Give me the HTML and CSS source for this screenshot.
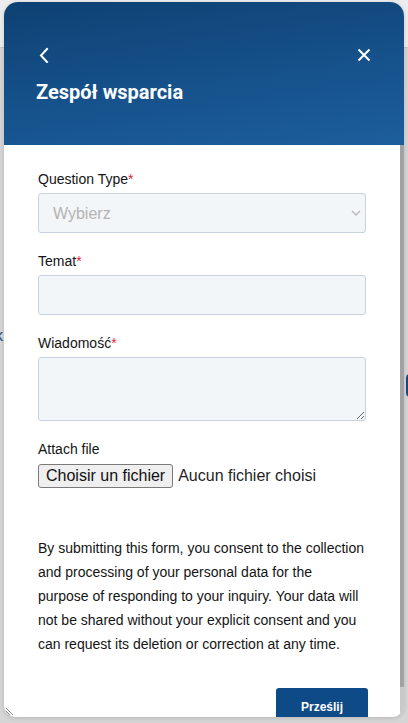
FILE: index.html
```html
<!DOCTYPE html>
<html lang="pl">
<head>
<meta charset="utf-8">
<title>Zespół wsparcia</title>
<link rel="stylesheet" href="styles.css">
</head>
<body>
<div class="page">
  <div class="page-top"></div>
  <div class="page-main">
    <div class="page-row page-row-k"><span class="ghost-k">k</span></div>
    <div class="page-row page-row-pill"><span class="ghost-pill"></span></div>
  </div>
</div>

<div class="panel">
  <div class="panel-header">
    <div class="header-icons">
      <svg class="icon" width="16" height="16" viewBox="0 0 16 16" aria-hidden="true">
        <path d="M11 2 L5 8.5 L11 15" fill="none" stroke="#fff" stroke-width="2" stroke-linecap="square"/>
      </svg>
      <svg class="icon" width="16" height="16" viewBox="0 0 16 16" aria-hidden="true">
        <path d="M2.5 2.5 L13.5 13.5 M13.5 2.5 L2.5 13.5" fill="none" stroke="#fff" stroke-width="2"/>
      </svg>
    </div>
    <h1 class="panel-title">Zespół wsparcia</h1>
  </div>

  <div class="panel-main">
    <div class="panel-body">
      <div class="field">
        <label class="field-label">Question Type<span class="req">*</span></label>
        <div class="select-wrap">
          <select class="control select">
            <option>Wybierz</option>
          </select>
          <svg class="select-arrow" width="10" height="6" viewBox="0 0 10 6" aria-hidden="true">
            <path d="M1 1 L5 5 L9 1" fill="none" stroke="#b9b9b9" stroke-width="1.4"/>
          </svg>
        </div>
      </div>

      <div class="field">
        <label class="field-label">Temat<span class="req">*</span></label>
        <input class="control input" type="text">
      </div>

      <div class="field">
        <label class="field-label">Wiadomość<span class="req">*</span></label>
        <textarea class="control textarea"></textarea>
      </div>

      <div class="field field-file">
        <label class="field-label">Attach file</label>
        <div class="file-row">
          <button class="file-btn" type="button">Choisir un fichier</button>
          <span class="file-name">Aucun fichier choisi</span>
        </div>
      </div>

      <p class="consent">By submitting this form, you consent to the collection and processing of your personal data for the purpose of responding to your inquiry. Your data will not be shared without your explicit consent and you can request its deletion or correction at any time.</p>

      <div class="actions">
        <button class="submit" type="button">Prześlij</button>
      </div>
    </div>
    <div class="scrollbar">
      <div class="scroll-thumb"></div>
    </div>
  </div>
  <svg class="grip" width="10" height="10" viewBox="0 0 10 10" aria-hidden="true">
    <path d="M1 2 L8 9 M1 5 L5 9" fill="none" stroke="#8a8a8a" stroke-width="1"/>
  </svg>
</div>
</body>
</html>
```

FILE: styles.css
```css
* { box-sizing: border-box; }

html, body {
  margin: 0;
  padding: 0;
  width: 408px;
  height: 723px;
  overflow: hidden;
}

body {
  background: #d5d5d5;
  font-family: "Liberation Sans", Arial, sans-serif;
  position: relative;
}

.page-top {
  height: 48px;
  background: #ececec;
  border-bottom: 1px solid #c6c6c6;
}

.page-main {
  padding-top: 278px;
}

.page-row {
  display: flex;
}

.page-row-k {
  height: 20px;
}

.ghost-k {
  margin-left: -5px;
  font-size: 16px;
  line-height: 20px;
  color: #1e4e86;
}

.page-row-pill {
  justify-content: flex-end;
  margin-top: 28px;
}

.ghost-pill {
  width: 8px;
  height: 23px;
  margin-right: -6px;
  border-radius: 4px;
  background: #164a82;
}

/* Panel */
.panel {
  position: absolute;
  left: 4px;
  top: 2px;
  width: 400px;
  height: 715px;
  border-radius: 14px 14px 12px 12px;
  overflow: hidden;
  background: #fff;
  display: flex;
  flex-direction: column;
  box-shadow: 0 1px 4px rgba(0, 0, 0, 0.15);
}

.panel-header {
  height: 143px;
  flex: none;
  padding: 45px 32px 0 32px;
  background: linear-gradient(172deg, #0e4173 0%, #155089 50%, #1c5e9c 100%);
  color: #fff;
}

.header-icons {
  display: flex;
  justify-content: space-between;
  height: 16px;
}

.icon {
  display: block;
}

.panel-title {
  margin: 17px 0 0 0;
  font-family: Roboto, "Liberation Sans", sans-serif;
  font-weight: 700;
  font-size: 20px;
  line-height: 24px;
  color: #fff;
}

.panel-main {
  flex: 1;
  min-height: 0;
  display: flex;
}

.panel-body {
  flex: 1;
  min-width: 0;
  overflow: hidden;
  padding: 24px 34px 24px 34px;
}

.scrollbar {
  width: 4px;
  flex: none;
  background: #c9c9c9;
}

.scroll-thumb {
  height: 542px;
  background: #a2a2a2;
}

.grip {
  position: absolute;
  left: 1px;
  bottom: 1px;
}

.field {
  margin-bottom: 18px;
}

.field-label {
  display: block;
  font-size: 14px;
  line-height: 20px;
  color: #141414;
  margin-bottom: 4px;
}

.req {
  color: #e3243b;
}

.control {
  display: block;
  width: 100%;
  margin: 0;
  background: #f3f6f9;
  border: 1px solid #c8d2de;
  border-radius: 3px;
  font-family: "Liberation Sans", Arial, sans-serif;
  font-size: 16px;
  outline: none;
}

.select-wrap {
  position: relative;
}

.select {
  height: 40px;
  appearance: none;
  -webkit-appearance: none;
  padding: 0 14px;
  color: #b3b3b3;
}

.select-arrow {
  position: absolute;
  right: 5px;
  top: 17px;
}

.input {
  height: 40px;
  padding: 0 14px;
}

.textarea {
  height: 64px;
  resize: vertical;
  padding: 8px 14px;
}

.field-file {
  margin-top: 17px;
  margin-bottom: 0;
}

.field-file .field-label {
  margin-bottom: 5px;
}

.file-row {
  display: flex;
  align-items: center;
  height: 24px;
}

.file-btn {
  height: 24px;
  padding: 0 7px;
  margin: 0;
  font-family: "Liberation Sans", Arial, sans-serif;
  font-size: 16px;
  color: #111;
  background: #efefef;
  border: 1px solid #7a7a7a;
  border-radius: 3px;
}

.file-name {
  margin-left: 5px;
  font-size: 16px;
  color: #1f1f1f;
}

.consent {
  margin: 48px 0 0 0;
  font-size: 14px;
  line-height: 24px;
  color: #141414;
}

.actions {
  display: flex;
  justify-content: flex-end;
  margin-top: 32px;
  margin-right: -2px;
}

.submit {
  width: 92px;
  height: 38px;
  border: none;
  border-radius: 3px;
  background: #0e4a86;
  color: #fff;
  font-family: "Liberation Sans", Arial, sans-serif;
  font-weight: 700;
  font-size: 12px;
}
```
